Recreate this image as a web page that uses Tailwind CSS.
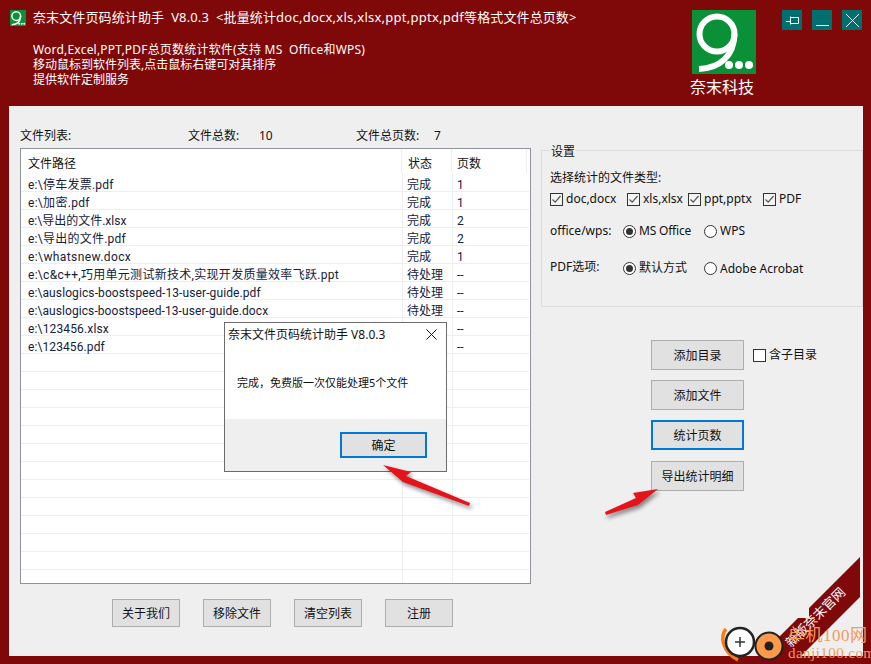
<!DOCTYPE html>
<html lang="zh">
<head>
<meta charset="utf-8">
<script src="https://cdn.jsdelivr.net/npm/@tailwindcss/browser@4"></script>
</head>
<body class="m-0 bg-[#7f0808]">
<div class="relative w-[871px] h-[664px] overflow-hidden bg-[#7f0808] text-[12px] leading-[18px] text-[#111] font-['Noto_Sans','Noto_Sans_CJK_SC',sans-serif]">

  <!-- header -->
  <header class="h-[106px] flex text-white">
    <div class="w-[33px] pl-[10px] pt-[10px]">
      <svg width="16" height="16" viewBox="0 0 64 64"><rect width="64" height="64" fill="#0a9138"/><circle cx="25" cy="24" r="17.5" fill="none" stroke="#fff" stroke-width="6"/><path d="M42.5 24C42 46 28 58 7 59" fill="none" stroke="#fff" stroke-width="6"/><circle cx="37" cy="55" r="4" fill="#fff"/><circle cx="47" cy="55" r="4" fill="#fff"/><circle cx="57" cy="55" r="4" fill="#fff"/></svg>
    </div>
    <div class="w-[659px] pt-[8px]">
      <div class="text-[13px] leading-[18px] tracking-[0.12px] whitespace-nowrap">奈末文件页码统计助手&nbsp;&nbsp;V8.0.3&nbsp;&nbsp;&lt;批量统计<span class="tracking-[0.25px]">doc,docx,xls,xlsx,ppt,pptx,pdf</span>等格式文件总页数&gt;</div>
      <div class="mt-[16px] leading-[15px] whitespace-nowrap">
        <div class="tracking-[0.2px]">Word,Excel,PPT,PDF总页数统计软件(支持 MS&nbsp;&nbsp;Office和WPS)</div>
        <div>移动鼠标到软件列表,点击鼠标右键可对其排序</div>
        <div>提供软件定制服务</div>
      </div>
    </div>
    <div class="w-[64px] pt-[10px] flex flex-col items-center">
      <svg width="64" height="64" viewBox="0 0 64 64"><rect width="64" height="64" fill="#0a9138"/><circle cx="25" cy="24" r="17.5" fill="none" stroke="#fff" stroke-width="6"/><path d="M42.5 24C42 46 28 58 7 59" fill="none" stroke="#fff" stroke-width="6"/><circle cx="37" cy="55" r="4" fill="#fff"/><circle cx="47" cy="55" r="4" fill="#fff"/><circle cx="57" cy="55" r="4" fill="#fff"/></svg>
      <div class="mt-[2px] -ml-[4px] text-[16px] leading-[22px] whitespace-nowrap">奈末科技</div>
    </div>
    <div class="ml-[26px] pt-[10px] flex gap-[10px] items-start">
      <div class="w-[20px] h-[20px] bg-[#006f6f]"><svg width="20" height="20" viewBox="0 0 20 20" fill="none" stroke="#fff"><path d="M4 11.5H8.5M8.5 7.5H16.5V13.5H8.5ZM8.5 6.5V14.5"/></svg></div>
      <div class="w-[20px] h-[20px] bg-[#006f6f]"><svg width="20" height="20" viewBox="0 0 20 20" fill="none" stroke="#fff"><path d="M4 15.5H17"/></svg></div>
      <div class="w-[20px] h-[20px] bg-[#006f6f]"><svg width="20" height="20" viewBox="0 0 20 20" fill="none" stroke="#fff" stroke-width="0.9"><path d="M4 4L17 17M17 4L4 17"/></svg></div>
    </div>
  </header>

  <!-- panel -->
  <main class="ml-[9px] w-[854px] h-[550px] bg-[#efefef] flex pl-[11px]">
    <section class="w-[511px]">
      <div class="h-[42px] pt-[21px] flex whitespace-nowrap">
        <span class="w-[168px]">文件列表:</span>
        <span class="w-[71px]">文件总数:</span>
        <span class="w-[97px]">10</span>
        <span class="w-[78px]">文件总页数:</span>
        <span>7</span>
      </div>
      <div class="h-[436px] border border-[#8f939e] bg-white overflow-hidden">
        <div class="h-[25px] grid grid-cols-[381px_50px_75px] items-start">
          <div class="h-[24px] pl-[7px] pt-[6px] border-r border-[#eeeeee]">文件路径</div>
          <div class="h-[24px] pl-[6px] pt-[6px] border-r border-[#eeeeee]">状态</div>
          <div class="h-[24px] pl-[5px] pt-[6px] border-r border-[#eeeeee]">页数</div>
        </div>
        <div class="w-[508px] whitespace-nowrap leading-[22px] text-[#15203a] font-['Roboto','Noto_Sans_CJK_SC',sans-serif]">
          <div class="h-[18px] grid grid-cols-[382px_50px_1fr] border-b border-[#eeeeee]"><div class="pl-[7px] tracking-[0.25px] border-r border-[#eeeeee]">e:\停车发票.pdf</div><div class="pl-[4px] border-r border-[#eeeeee]">完成</div><div class="pl-[4px]">1</div></div>
          <div class="h-[18px] grid grid-cols-[382px_50px_1fr] border-b border-[#eeeeee]"><div class="pl-[7px] tracking-[0.3px] border-r border-[#eeeeee]">e:\加密.pdf</div><div class="pl-[4px] border-r border-[#eeeeee]">完成</div><div class="pl-[4px]">1</div></div>
          <div class="h-[18px] grid grid-cols-[382px_50px_1fr] border-b border-[#eeeeee]"><div class="pl-[7px] border-r border-[#eeeeee]">e:\导出的文件.xlsx</div><div class="pl-[4px] border-r border-[#eeeeee]">完成</div><div class="pl-[4px]">2</div></div>
          <div class="h-[18px] grid grid-cols-[382px_50px_1fr] border-b border-[#eeeeee]"><div class="pl-[7px] tracking-[0.25px] border-r border-[#eeeeee]">e:\导出的文件.pdf</div><div class="pl-[4px] border-r border-[#eeeeee]">完成</div><div class="pl-[4px]">2</div></div>
          <div class="h-[18px] grid grid-cols-[382px_50px_1fr] border-b border-[#eeeeee]"><div class="pl-[7px] tracking-[0.4px] border-r border-[#eeeeee]">e:\whatsnew.docx</div><div class="pl-[4px] border-r border-[#eeeeee]">完成</div><div class="pl-[4px]">1</div></div>
          <div class="h-[18px] grid grid-cols-[382px_50px_1fr] border-b border-[#eeeeee]"><div class="pl-[7px] tracking-[0.3px] border-r border-[#eeeeee]">e:\c&amp;c++,巧用单元测试新技术,实现开发质量效率飞跃.ppt</div><div class="pl-[4px] border-r border-[#eeeeee]">待处理</div><div class="pl-[4px]">--</div></div>
          <div class="h-[18px] grid grid-cols-[382px_50px_1fr] border-b border-[#eeeeee]"><div class="pl-[7px] tracking-[0.1px] border-r border-[#eeeeee]">e:\auslogics-boostspeed-13-user-guide.pdf</div><div class="pl-[4px] border-r border-[#eeeeee]">待处理</div><div class="pl-[4px]">--</div></div>
          <div class="h-[18px] grid grid-cols-[382px_50px_1fr] border-b border-[#eeeeee]"><div class="pl-[7px] tracking-[0.08px] border-r border-[#eeeeee]">e:\auslogics-boostspeed-13-user-guide.docx</div><div class="pl-[4px] border-r border-[#eeeeee]">待处理</div><div class="pl-[4px]">--</div></div>
          <div class="h-[18px] grid grid-cols-[382px_50px_1fr] border-b border-[#eeeeee]"><div class="pl-[7px] tracking-[0.15px] border-r border-[#eeeeee]">e:\123456.xlsx</div><div class="pl-[4px] border-r border-[#eeeeee]">待处理</div><div class="pl-[4px]">--</div></div>
          <div class="h-[18px] grid grid-cols-[382px_50px_1fr] border-b border-[#eeeeee]"><div class="pl-[7px] tracking-[0.1px] border-r border-[#eeeeee]">e:\123456.pdf</div><div class="pl-[4px] border-r border-[#eeeeee]">待处理</div><div class="pl-[4px]">--</div></div>
          <div class="h-[18px] grid grid-cols-[382px_50px_1fr] border-b border-[#eeeeee]"><div class="border-r border-[#eeeeee]"></div><div class="border-r border-[#eeeeee]"></div><div></div></div>
          <div class="h-[18px] grid grid-cols-[382px_50px_1fr] border-b border-[#eeeeee]"><div class="border-r border-[#eeeeee]"></div><div class="border-r border-[#eeeeee]"></div><div></div></div>
          <div class="h-[18px] grid grid-cols-[382px_50px_1fr] border-b border-[#eeeeee]"><div class="border-r border-[#eeeeee]"></div><div class="border-r border-[#eeeeee]"></div><div></div></div>
          <div class="h-[18px] grid grid-cols-[382px_50px_1fr] border-b border-[#eeeeee]"><div class="border-r border-[#eeeeee]"></div><div class="border-r border-[#eeeeee]"></div><div></div></div>
          <div class="h-[18px] grid grid-cols-[382px_50px_1fr] border-b border-[#eeeeee]"><div class="border-r border-[#eeeeee]"></div><div class="border-r border-[#eeeeee]"></div><div></div></div>
          <div class="h-[18px] grid grid-cols-[382px_50px_1fr] border-b border-[#eeeeee]"><div class="border-r border-[#eeeeee]"></div><div class="border-r border-[#eeeeee]"></div><div></div></div>
          <div class="h-[18px] grid grid-cols-[382px_50px_1fr] border-b border-[#eeeeee]"><div class="border-r border-[#eeeeee]"></div><div class="border-r border-[#eeeeee]"></div><div></div></div>
          <div class="h-[18px] grid grid-cols-[382px_50px_1fr] border-b border-[#eeeeee]"><div class="border-r border-[#eeeeee]"></div><div class="border-r border-[#eeeeee]"></div><div></div></div>
          <div class="h-[18px] grid grid-cols-[382px_50px_1fr] border-b border-[#eeeeee]"><div class="border-r border-[#eeeeee]"></div><div class="border-r border-[#eeeeee]"></div><div></div></div>
          <div class="h-[18px] grid grid-cols-[382px_50px_1fr] border-b border-[#eeeeee]"><div class="border-r border-[#eeeeee]"></div><div class="border-r border-[#eeeeee]"></div><div></div></div>
          <div class="h-[18px] grid grid-cols-[382px_50px_1fr] border-b border-[#eeeeee]"><div class="border-r border-[#eeeeee]"></div><div class="border-r border-[#eeeeee]"></div><div></div></div>
          <div class="h-[18px] grid grid-cols-[382px_50px_1fr] border-b border-[#eeeeee]"><div class="border-r border-[#eeeeee]"></div><div class="border-r border-[#eeeeee]"></div><div></div></div>
          <div class="h-[13px] grid grid-cols-[382px_50px_1fr]"><div class="border-r border-[#eeeeee]"></div><div class="border-r border-[#eeeeee]"></div><div></div></div>
        </div>
      </div>
      <div class="mt-[15px] ml-[92px] flex gap-[23px]">
        <button class="w-[68px] h-[28px] pt-[2px] border border-[#adadad] bg-[#e1e1e1]">关于我们</button>
        <button class="w-[68px] h-[28px] pt-[2px] border border-[#adadad] bg-[#e1e1e1]">移除文件</button>
        <button class="w-[68px] h-[28px] pt-[2px] border border-[#adadad] bg-[#e1e1e1]">清空列表</button>
        <button class="w-[68px] h-[28px] pt-[2px] border border-[#adadad] bg-[#e1e1e1]">注册</button>
      </div>
    </section>

    <section class="ml-[10px] w-[322px]">
      <div class="mt-[44px] h-[157px] border border-[#dcdcdc] pl-[8px]">
        <div class="-mt-[8px] w-fit bg-[#efefef] px-[1px] h-[16px] leading-[18px]">设置</div>
        <div class="mt-[9px] h-[18px] leading-[20px]">选择统计的文件类型:</div>
        <div class="mt-[4px] h-[18px] flex items-center whitespace-nowrap leading-[20px]">
          <div class="w-[77px] flex items-center gap-[3px]"><span class="w-[13px] h-[13px] border border-[#333] bg-[#f4f4f4] flex"><svg width="11" height="11" viewBox="0 0 11 11" fill="none" stroke="#555" stroke-width="1.2"><path d="M1.5 5.5L4.2 8.2L9.5 2"/></svg></span>doc,docx</div>
          <div class="w-[61px] flex items-center gap-[3px]"><span class="w-[13px] h-[13px] border border-[#333] bg-[#f4f4f4] flex"><svg width="11" height="11" viewBox="0 0 11 11" fill="none" stroke="#555" stroke-width="1.2"><path d="M1.5 5.5L4.2 8.2L9.5 2"/></svg></span>xls,xlsx</div>
          <div class="w-[75px] flex items-center gap-[3px]"><span class="w-[13px] h-[13px] border border-[#333] bg-[#f4f4f4] flex"><svg width="11" height="11" viewBox="0 0 11 11" fill="none" stroke="#555" stroke-width="1.2"><path d="M1.5 5.5L4.2 8.2L9.5 2"/></svg></span>ppt,pptx</div>
          <div class="flex items-center gap-[3px]"><span class="w-[13px] h-[13px] border border-[#333] bg-[#f4f4f4] flex"><svg width="11" height="11" viewBox="0 0 11 11" fill="none" stroke="#555" stroke-width="1.2"><path d="M1.5 5.5L4.2 8.2L9.5 2"/></svg></span>PDF</div>
        </div>
        <div class="mt-[14px] h-[18px] flex items-center whitespace-nowrap">
          <div class="w-[73px] -mt-[1px]">office/wps:</div>
          <div class="w-[81px] flex items-center gap-[3px] tracking-[-0.2px]"><span class="w-[13px] h-[13px] rounded-full border border-[#333] bg-white flex items-center justify-center"><span class="w-[7px] h-[7px] rounded-full bg-[#333]"></span></span>MS Office</div>
          <div class="flex items-center gap-[3px]"><span class="w-[13px] h-[13px] rounded-full border border-[#333] bg-white"></span>WPS</div>
        </div>
        <div class="mt-[19px] h-[18px] flex items-center whitespace-nowrap">
          <div class="w-[73px] -mt-[2px]">PDF选项:</div>
          <div class="w-[81px] flex items-center gap-[3px]"><span class="w-[13px] h-[13px] rounded-full border border-[#333] bg-white flex items-center justify-center"><span class="w-[7px] h-[7px] rounded-full bg-[#333]"></span></span>默认方式</div>
          <div class="flex items-center gap-[3px]"><span class="w-[13px] h-[13px] rounded-full border border-[#333] bg-white"></span><span class="pt-[2px]">Adobe Acrobat</span></div>
        </div>
      </div>
      <div class="mt-[33px] pl-[110px] flex flex-col items-start">
        <div class="flex items-start">
          <button class="w-[93px] h-[30px] pt-[2px] border border-[#adadad] bg-[#e1e1e1]">添加目录</button>
          <div class="ml-[9px] mt-[6px] flex items-center gap-[3px] whitespace-nowrap"><span class="w-[13px] h-[13px] border border-[#333] bg-white"></span>含子目录</div>
        </div>
        <button class="mt-[10px] w-[93px] h-[30px] pt-[2px] border border-[#adadad] bg-[#e1e1e1]">添加文件</button>
        <button class="mt-[10px] w-[93px] h-[30px] pt-[2px] border-2 border-[#0078d7] bg-[#e1e1e1]">统计页数</button>
        <button class="mt-[11px] w-[93px] h-[30px] pt-[2px] border border-[#adadad] bg-[#e1e1e1]">导出统计明细</button>
      </div>
    </section>
  </main>

  <!-- dialog -->
  <div class="absolute left-[224px] top-[322px] w-[223px] h-[150px] border border-[#6b6b6b] bg-white flex flex-col">
    <div class="h-[22px] pl-[3px] pt-[3px] flex whitespace-nowrap">
      <span>奈末文件页码统计助手 V8.0.3</span>
      <svg class="absolute left-[201px] top-[6px]" width="11" height="11" viewBox="0 0 11 11" fill="none" stroke="#111"><path d="M.5 .5L10.5 10.5M10.5 .5L.5 10.5"/></svg>
    </div>
    <div class="h-[74px] pl-[12px] pt-[29px] whitespace-nowrap text-[11px]">完成，免费版一次仅能处理5个文件</div>
    <div class="flex-1 bg-[#efefef] pl-[115px] pt-[13px]">
      <button class="w-[87px] h-[26px] pt-[2px] border-2 border-[#0078d7] bg-[#e1e1e1]">确定</button>
    </div>
  </div>

  <!-- arrows -->
  <svg class="absolute left-0 top-0 drop-shadow-[2px_3px_2px_rgba(0,0,0,0.45)]" width="871" height="664" viewBox="0 0 871 664">
    <polygon fill="#e5141a" points="383,465 411,472 406,476 470,503 469,506 403,482"/>
    <polygon fill="#e5141a" points="658,489 633,493 636,498 605,512 606,515 638,505"/>
  </svg>

  <!-- ribbon and watermark -->
  <svg class="absolute left-0 top-0" width="871" height="664" viewBox="0 0 871 664">
    <polygon fill="#7f0808" points="860,557 809,608 809,618 798,618 760,656 801,656 860,597"/>
    <path d="M726 629C720 636 722 652 738 660" fill="none" stroke="#f57c1a" stroke-width="3.5"/>
    <circle cx="740" cy="642" r="14" fill="#fff" stroke="#222" stroke-width="2.5"/>
    <path d="M735 642H745M740 637V647" stroke="#333" stroke-width="1.5"/>
    <circle cx="769" cy="646" r="13.5" fill="#fb9a4b" stroke="#222" stroke-width="2"/>
    <circle cx="769" cy="646" r="4.5" fill="#222"/>
  </svg>
  <div class="absolute left-[775px] top-[608px] w-[80px] text-center text-white text-[13px] leading-[18px] -rotate-45 whitespace-nowrap">新版奈末官网</div>
  <div class="absolute left-[788px] top-[626px] text-[#f59a5e] whitespace-nowrap">
    <div class="text-[17px] leading-[20px] tracking-[0.5px] font-['Liberation_Serif','Noto_Sans_CJK_SC',serif]">单机100网</div>
    <div class="text-[15px] leading-[14px] tracking-[0.45px] font-['Liberation_Serif',serif]">danji100.com</div>
  </div>
</div>
</body>
</html>
